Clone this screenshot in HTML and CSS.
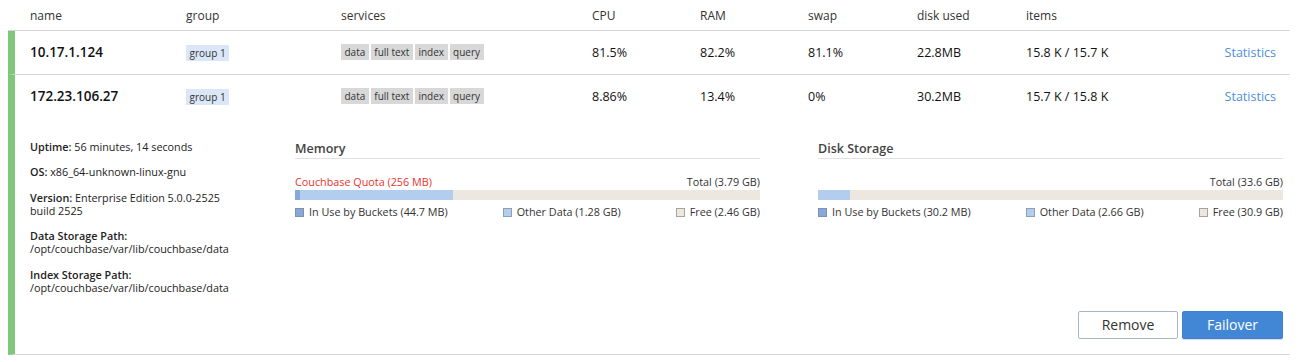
FILE: index.html
```html
<!DOCTYPE html>
<html lang="en">
<head>
    <meta charset="UTF-8">
    <title>Servers</title>
    <link rel="stylesheet" href="styles.css">
</head>
<body>
    <div class="servers">
        <div class="cols head">
            <span>name</span>
            <span>group</span>
            <span>services</span>
            <span>CPU</span>
            <span>RAM</span>
            <span>swap</span>
            <span>disk used</span>
            <span>items</span>
            <span></span>
        </div>

        <div class="server">
            <div class="cols row">
                <span class="name">10.17.1.124</span>
                <span><span class="badge group">group 1</span></span>
                <span class="services">
                    <span class="badge">data</span><span class="badge">full text</span><span class="badge">index</span><span class="badge">query</span>
                </span>
                <span>81.5%</span>
                <span>82.2%</span>
                <span>81.1%</span>
                <span>22.8MB</span>
                <span>15.8 K / 15.7 K</span>
                <a class="link">Statistics</a>
            </div>
        </div>

        <div class="server">
            <div class="cols row">
                <span class="name">172.23.106.27</span>
                <span><span class="badge group">group 1</span></span>
                <span class="services">
                    <span class="badge">data</span><span class="badge">full text</span><span class="badge">index</span><span class="badge">query</span>
                </span>
                <span>8.86%</span>
                <span>13.4%</span>
                <span>0%</span>
                <span>30.2MB</span>
                <span>15.7 K / 15.8 K</span>
                <a class="link">Statistics</a>
            </div>

            <div class="details">
                <div class="details-top">
                    <div class="info">
                        <p><b>Uptime:</b> 56 minutes, 14 seconds</p>
                        <p><b>OS:</b> x86_64-unknown-linux-gnu</p>
                        <p><b>Version:</b> Enterprise Edition 5.0.0-2525<br>build 2525</p>
                        <p><b>Data Storage Path:</b><br>/opt/couchbase/var/lib/couchbase/data</p>
                        <p><b>Index Storage Path:</b><br>/opt/couchbase/var/lib/couchbase/data</p>
                    </div>

                    <div class="usage">
                        <h4>Memory</h4>
                        <div class="usage-labels">
                            <span class="quota">Couchbase Quota (256 MB)</span>
                            <span>Total (3.79 GB)</span>
                        </div>
                        <div class="bar">
                            <div class="seg other" style="width: 34%">
                                <div class="seg used" style="width: 3%"></div>
                            </div>
                        </div>
                        <div class="legend">
                            <span><i class="sq used"></i>In Use by Buckets (44.7 MB)</span>
                            <span><i class="sq other"></i>Other Data (1.28 GB)</span>
                            <span><i class="sq free"></i>Free (2.46 GB)</span>
                        </div>
                    </div>

                    <div class="usage">
                        <h4>Disk Storage</h4>
                        <div class="usage-labels">
                            <span class="quota"></span>
                            <span>Total (33.6 GB)</span>
                        </div>
                        <div class="bar">
                            <div class="seg other" style="width: 6.9%"></div>
                        </div>
                        <div class="legend">
                            <span><i class="sq used"></i>In Use by Buckets (30.2 MB)</span>
                            <span><i class="sq other"></i>Other Data (2.66 GB)</span>
                            <span><i class="sq free"></i>Free (30.9 GB)</span>
                        </div>
                    </div>
                </div>

                <div class="actions">
                    <button class="btn btn-outline">Remove</button>
                    <button class="btn btn-primary">Failover</button>
                </div>
            </div>
        </div>
    </div>
</body>
</html>
```

FILE: styles.css
```css
body {
    margin: 0;
    font-family: "Open Sans", "Liberation Sans", sans-serif;
    color: #222;
    background: #fff;
}

.servers {
    margin-left: 8px;
    width: 1282px;
}

.cols {
    display: grid;
    grid-template-columns: 156px 155px 251px 108px 108px 109px 109px 1fr auto;
    align-items: center;
}

.head {
    height: 30px;
    padding: 0 14px 0 22px;
    border-bottom: 1px solid #d6d6d6;
    font-size: 12px;
    color: #333;
}

.server {
    border-left: 7px solid #81c77a;
    border-bottom: 1px solid #d6d6d6;
}

.row {
    height: 43px;
    padding: 0 14px 1px 15px;
    box-sizing: border-box;
    font-size: 12.5px;
    color: #111;
}

.row .name {
    font-size: 13.5px;
    font-weight: 600;
}

.services {
    display: flex;
    gap: 2px;
}

.badge {
    display: inline-block;
    height: 16px;
    line-height: 16px;
    padding: 0 3.5px;
    font-size: 10px;
    color: #333;
    background: #d8d8d8;
}

.badge.group {
    background: #dbe7f7;
}

.link {
    color: #4f8fd8;
    font-size: 12.5px;
    cursor: pointer;
}

.details {
    padding: 22px 7px 15px 15px;
}

.details-top {
    display: flex;
    gap: 58px;
}

.info {
    width: 207px;
    font-size: 10.8px;
    color: #222;
}

.info p {
    margin: 0 0 12.4px;
    line-height: 13px;
}

.info p:last-child {
    margin-bottom: 0;
}

.info b {
    font-weight: 600;
}

.usage {
    width: 465px;
    font-size: 10.8px;
    color: #333;
}

.usage h4 {
    margin: 0;
    height: 18px;
    line-height: 18px;
    font-size: 12.5px;
    font-weight: 600;
    color: #444;
    border-bottom: 1px solid #e2e2e2;
}

.usage-labels {
    display: flex;
    justify-content: space-between;
    margin-top: 16px;
    line-height: 14px;
}

.quota {
    color: #e8332e;
}

.bar {
    height: 10px;
    margin-top: 1px;
    background: #ede8df;
}

.seg {
    height: 100%;
}

.seg.other {
    background: #b3cdee;
}

.seg.used {
    background: #86a8da;
}

.legend {
    display: flex;
    justify-content: space-between;
    margin-top: 5px;
    line-height: 14px;
}

.sq {
    display: inline-block;
    width: 7px;
    height: 7px;
    margin-right: 5px;
    border: 1px solid #999;
    vertical-align: -1px;
}

.sq.used {
    background: #86a8da;
    border-color: #7f92aa;
}

.sq.other {
    background: #b3cdee;
    border-color: #8fa0b5;
}

.sq.free {
    background: #ede8df;
    border-color: #a8a49c;
}

.actions {
    display: flex;
    justify-content: flex-end;
    gap: 4px;
    margin-top: 17px;
}

.btn {
    height: 28px;
    font-family: inherit;
    font-size: 14px;
    cursor: pointer;
    border-radius: 2px;
}

.btn-outline {
    width: 100px;
    background: #fff;
    color: #333;
    border: 1px solid #a9b7c5;
}

.btn-primary {
    width: 101px;
    background: #4287d6;
    color: #fff;
    border: 1px solid #3f82cf;
    box-shadow: 0 1px 1px rgba(0, 0, 0, 0.15);
}
```
